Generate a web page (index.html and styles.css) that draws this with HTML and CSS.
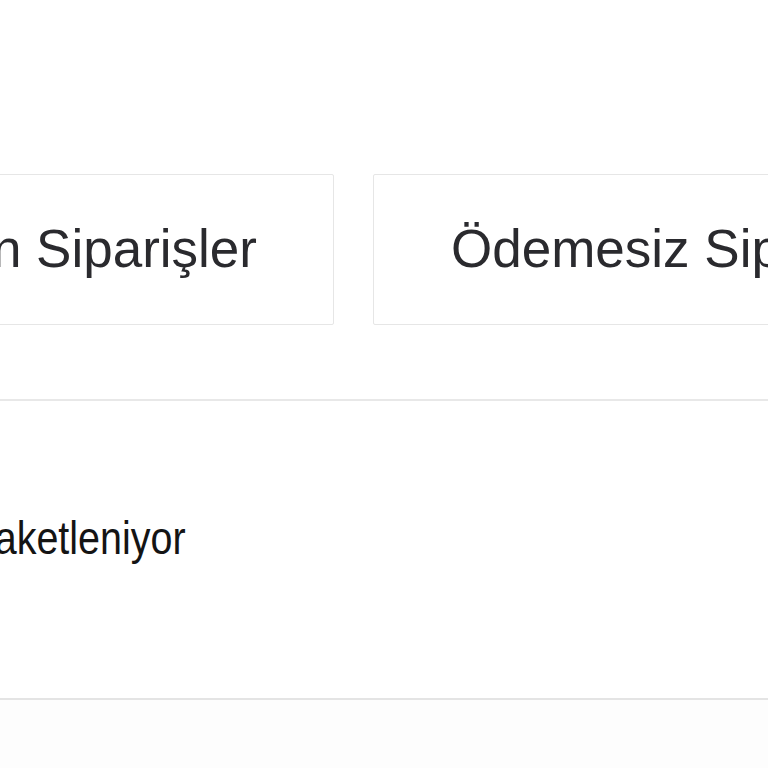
FILE: index.html
```html
<!DOCTYPE html>
<html lang="tr">
<head>
<meta charset="utf-8">
<link rel="stylesheet" href="styles.css">
</head>
<body>
<div class="page">
  <div class="tabs">
    <div class="tab-slot tab-slot-first">
      <div class="tab">Tamamlanan Siparişler</div>
    </div>
    <div class="tab-slot">
      <div class="tab tab-second">Ödemesiz Siparişler</div>
    </div>
  </div>
  <div class="table">
    <div class="row">
      <div class="status-slot"><span class="status">Paketleniyor</span></div>
    </div>
  </div>
  <div class="footer"></div>
</div>
</body>
</html>
```
FILE: styles.css
```css
html, body {
  margin: 0;
  padding: 0;
  background: #ffffff;
}
.page {
  width: 768px;
  height: 768px;
  overflow: hidden;
  font-family: "Liberation Sans", Arial, sans-serif;
}
.tabs {
  display: flex;
  gap: 39px;
  padding-top: 174px;
  height: 151px;
}
.tab-slot {
  flex: none;
  display: flex;
}
.tab-slot-first {
  width: 334px;
  justify-content: flex-end;
}
.tab {
  flex: none;
  box-sizing: border-box;
  height: 151px;
  display: flex;
  align-items: center;
  padding: 0 76px 2px 80px;
  border: 1px solid #e6e6e6;
  border-radius: 2px;
  font-size: 53px;
  color: #2a2a2e;
  white-space: nowrap;
}
.tab-second {
  padding: 0 80px 2px 77px;
}
.table {
  margin-top: 74px;
  border-top: 2px solid #e8e8e8;
  border-bottom: 2px solid #e4e4e4;
}
.row {
  height: 297px;
  display: flex;
  align-items: center;
  padding-bottom: 24px;
  box-sizing: border-box;
}
.status-slot {
  flex: none;
  width: 186px;
  display: flex;
  justify-content: flex-end;
}
.status {
  flex: none;
  display: inline-block;
  white-space: nowrap;
  font-size: 47px;
  color: #141414;
  transform: scaleX(0.84);
  transform-origin: right center;
}
.footer {
  height: 70px;
  background: #fdfdfd;
}
```
